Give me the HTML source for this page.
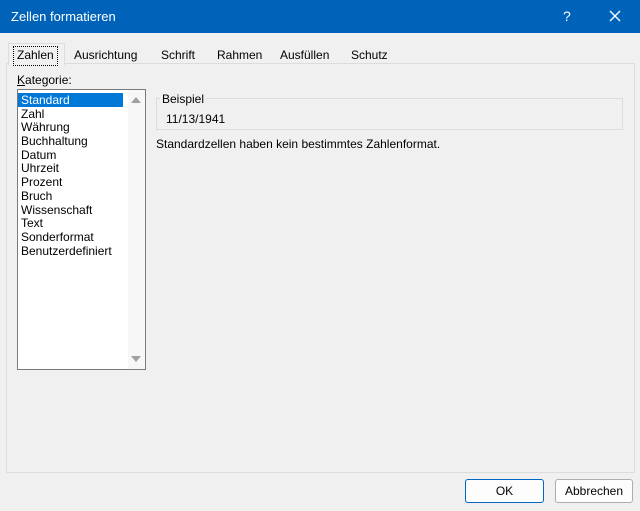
<!DOCTYPE html><html><head><style>
body{margin:0;width:640px;height:511px;background:#f0f0f0;font-family:"Liberation Sans",sans-serif;font-size:12px;color:#000;position:relative;overflow:hidden}
.a{position:absolute}
.title{left:0;top:0;width:640px;height:33px;background:#0063b9;color:#fff}
.panel{left:6px;top:63px;width:627px;height:408px;border:1px solid #dcdcdc;background:#f0f0f0}
.tab{top:46px;height:18px;line-height:18px}
.list{left:17px;top:89px;width:127px;height:279px;border:1px solid #7a7a7a;background:#fff}
.it{height:13.7px;line-height:14px;padding-left:3px}
.btn{top:479px;height:22px;border:1px solid #adadad;background:#fdfdfd;border-radius:3px;text-align:center;line-height:22px}
</style></head><body>
<div class="a title"><span class="a" style="left:11px;top:9px;font-size:13px">Zellen formatieren</span>
<span class="a" style="left:563px;top:8px;font-size:14px">?</span>
<svg class="a" style="left:609px;top:10px" width="12" height="12"><path d="M1 1L11 11M11 1L1 11" stroke="#fff" stroke-width="1.3"/></svg></div>
<div class="a panel"></div>
<div class="a" style="left:8px;top:43px;width:55px;height:21px;background:#f0f0f0;border:1px solid #dcdcdc;border-bottom:none"></div>
<div class="a tab" style="left:13px;border:1px dotted #000;padding:0 3px;line-height:16px;top:46px">Zahlen</div>
<div class="a tab" style="left:74px">Ausrichtung</div>
<div class="a tab" style="left:161px">Schrift</div>
<div class="a tab" style="left:217px">Rahmen</div>
<div class="a tab" style="left:280px">Ausfüllen</div>
<div class="a tab" style="left:351px">Schutz</div>
<div class="a" style="left:17px;top:73px"><u>K</u>ategorie:</div>
<div class="a list"><div style="height:3px"></div>
<div class="it" style="background:#0078d7;color:#fff;width:102px">Standard</div><div class="it">Zahl</div><div class="it">Währung</div><div class="it">Buchhaltung</div><div class="it">Datum</div><div class="it">Uhrzeit</div><div class="it">Prozent</div><div class="it">Bruch</div><div class="it">Wissenschaft</div><div class="it">Text</div><div class="it">Sonderformat</div><div class="it">Benutzerdefiniert</div>
<div class="a" style="left:110px;top:0;width:17px;height:279px;background:#f7f7f7"></div>
<svg class="a" style="left:113px;top:6px" width="10" height="8"><path d="M0 7L5 1L10 7Z" fill="#a0a0a0"/></svg>
<svg class="a" style="left:113px;top:265px" width="10" height="8"><path d="M0 1L5 7L10 1Z" fill="#a0a0a0"/></svg>
</div>
<div class="a" style="left:156px;top:98px;width:465px;height:30px;border:1px solid #dcdcdc"></div>
<div class="a" style="left:160px;top:92px;background:#f0f0f0;padding:0 2px">Beispiel</div>
<div class="a" style="left:166px;top:112px">11/13/1941</div>
<div class="a" style="left:156px;top:137px">Standardzellen haben kein bestimmtes Zahlenformat.</div>
<div class="a btn" style="left:465px;width:77px;border:1px solid #0067c0">OK</div>
<div class="a btn" style="left:555px;width:76px">Abbrechen</div>
</body></html>
